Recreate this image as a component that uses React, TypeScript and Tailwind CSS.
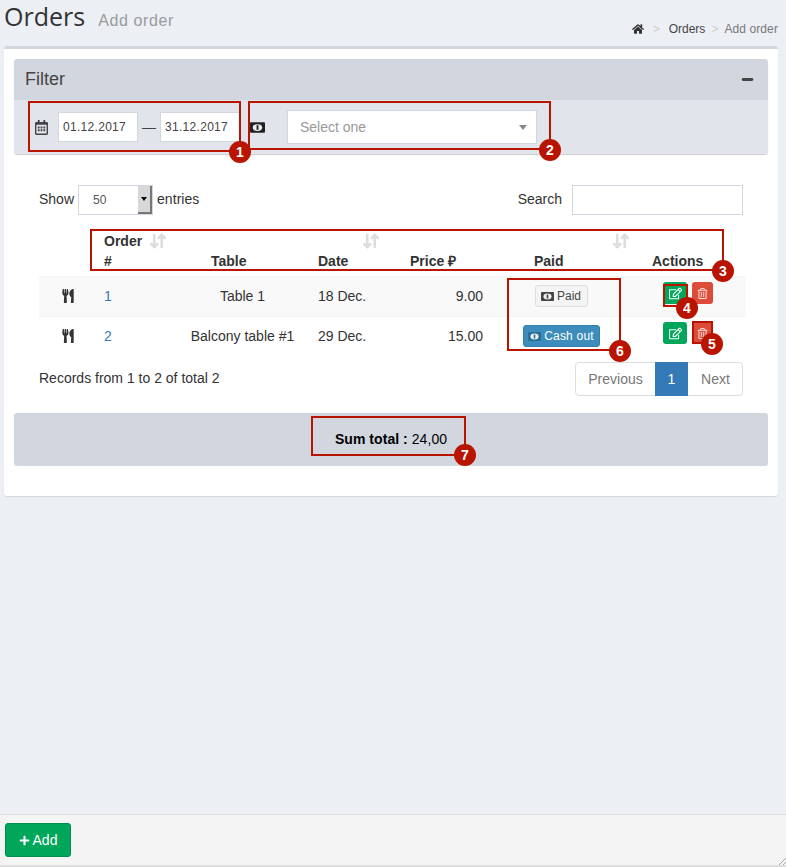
import React from 'react';
import { ArrowDownUp, Minus } from 'lucide-react';
import { FaHome, FaRegCalendarAlt, FaUtensils, FaRegEdit, FaRegTrashAlt, FaPlus } from 'react-icons/fa';

// Red numbered callout drawn over the screenshot
const Callout: React.FC<{ box: string; badge: string; n: number }> = ({ box, badge, n }) => (
  <>
    <div className={`absolute border-2 border-[#b81400] ${box}`} />
    <div className={`absolute w-[22px] h-[22px] rounded-full bg-[#b81400] text-white text-[14px] font-bold flex items-center justify-center ${badge}`}>
      {n}
    </div>
  </>
);

const SortIcon = () => <ArrowDownUp className="h-[18px] w-[18px] text-[#dddddd]" strokeWidth={3.5} />;

// Banknote icon, dark body with a light oval in the middle
const MoneyIcon: React.FC<{ className?: string }> = ({ className }) => (
  <svg viewBox="0 0 16 11" className={className} fill="currentColor">
    <rect x="0" y="0" width="16" height="11" rx="1" />
    <ellipse cx="8" cy="5.5" rx="5" ry="3.6" fill="#fff" opacity="0.92" />
    <rect x="7" y="3" width="2" height="5" />
  </svg>
);

const COLS = 'grid-cols-[60px_90px_107px_100px_100px_130px_120px]';

const Row: React.FC<{ bg?: string; n: string; table: string; date: string; price: string; children: React.ReactNode }> = ({
  bg,
  n,
  table,
  date,
  price,
  children,
}) => (
  <div className={`h-[39.5px] grid ${COLS} items-center ${bg ?? ''}`}>
    <span className="flex justify-end pr-[24px]"><FaUtensils className="h-[14px] w-[14px] text-[#333]" /></span>
    <span className="pl-[5px] text-[#337ab7]">{n}</span>
    <span className="text-center whitespace-nowrap">{table}</span>
    <span className="pl-[22px] whitespace-nowrap">{date}</span>
    <span className="text-right pr-[13px]">{price}</span>
    <span className="flex justify-center">{children}</span>
    <span className="flex gap-[5px] pl-[37px] -mt-[6px]">
      <span className="h-[22px] w-[24px] rounded-[3px] bg-[#00a65a] flex items-center justify-center">
        <FaRegEdit className="h-[13px] w-[13px] text-white" />
      </span>
      <span className="h-[22px] w-[21px] rounded-[3px] bg-[#dd4b39] flex items-center justify-center">
        <FaRegTrashAlt className="h-[11px] w-[11px] text-[#fbdcd6]" />
      </span>
    </span>
  </div>
);

const App: React.FC = () => {
  return (
    <div className="relative h-[867px] w-[786px] overflow-hidden bg-[#ecf0f5] font-['Liberation_Sans',Arial,sans-serif] text-[14px] text-[#333] flex flex-col">
      {/* Page title and breadcrumb */}
      <div className="h-[46px] flex-shrink-0 flex justify-between px-[4px]">
        <div className="flex items-baseline -mt-[1px]">
          <h1 className="text-[25px] leading-[34px] text-[#333] font-['Open_Sans',sans-serif]">Orders</h1>
          <span className="ml-[13px] text-[16px] tracking-[0.6px] text-[#9a9a9a]">Add order</span>
        </div>
        <div className="flex items-center h-[18px] mt-[20px] text-[12px] pr-[4px]">
          <FaHome className="h-[12px] w-[12px] text-[#333]" />
          <span className="mx-[9px] text-[#ccc]">&gt;</span>
          <span className="text-[#444]">Orders</span>
          <span className="mx-[6px] text-[#ccc]">&gt;</span>
          <span className="text-[#777] tracking-[0.1px]">Add order</span>
        </div>
      </div>

      {/* Main card */}
      <div className="ml-[4px] w-[774px] h-[450px] flex-shrink-0 bg-white border-t-[3px] border-[#d2d6de] rounded-[3px] shadow-[0_1px_1px_rgba(0,0,0,0.1)] px-[10px] pt-[10px]">
        {/* Filter box */}
        <div className="h-[95px] rounded-[3px] shadow-[0_1px_1px_rgba(0,0,0,0.2)] overflow-hidden">
          <div className="h-[41px] bg-[#d2d6de] flex items-center justify-between pl-[11px] pr-[13px]">
            <span className="text-[18px] text-[#444]">Filter</span>
            <Minus className="h-[15px] w-[15px] text-[#444]" strokeWidth={4.5} />
          </div>
          <div className="h-[54px] bg-[#e1e4ea] flex items-center pl-[21px]">
            <FaRegCalendarAlt className="h-[15px] w-[13px] text-[#444]" />
            <div className="ml-[10px] w-[80px] h-[30px] bg-white border border-[#d2d6de] flex items-center pl-[4px] text-[12px] tracking-[0.3px] text-[#444]">01.12.2017</div>
            <span className="w-[22px] text-center text-[14px] text-[#444]">—</span>
            <div className="w-[80px] h-[30px] bg-white border border-[#d2d6de] flex items-center pl-[4px] text-[12px] tracking-[0.3px] text-[#444]">31.12.2017</div>
            <MoneyIcon className="ml-[10px] h-[11px] w-[15px] text-[#222]" />
            <div className="ml-[22px] w-[250px] h-[34px] bg-white border border-[#d2d6de] flex items-center justify-between pl-[12px] pr-[9px] text-[14px] text-[#999]">
              <span>Select one</span>
              <span className="w-0 h-0 border-x-[4px] border-x-transparent border-t-[5px] border-t-[#888]" />
            </div>
          </div>
        </div>

        {/* Table controls */}
        <div className="mt-[31px] px-[25px] h-[30px] flex items-center justify-between">
          <div className="flex items-center">
            <span className="-mt-[2px]">Show</span>
            <div className="ml-[4px] w-[75px] h-[30px] border border-[#d2d6de] flex items-center justify-between">
              <span className="pl-[14px] text-[12px] text-[#555]">50</span>
              <span className="w-[14px] h-[28px] bg-[#d8d8d8] border-r-2 border-b-2 border-[#777] flex items-center justify-center">
                <span className="w-0 h-0 border-x-[3px] border-x-transparent border-t-[4px] border-t-black" />
              </span>
            </div>
            <span className="ml-[4px] -mt-[2px] tracking-[0.05px]">entries</span>
          </div>
          <div className="flex items-center">
            <span className="-mt-[2px]">Search</span>
            <div className="ml-[10px] w-[171px] h-[30px] border border-[#d2d6de]" />
          </div>
        </div>

        {/* Orders table */}
        <div className="mx-[25px] mt-[16px] w-[707px]">
          <div className="h-[46px] border-b border-[#f4f4f4] font-bold leading-[20px]">
            <div className="flex h-[20px] items-center">
              <span className="ml-[65px]">Order</span>
              <span className="ml-[7px]"><SortIcon /></span>
              <span className="ml-[195px]"><SortIcon /></span>
              <span className="ml-[232px]"><SortIcon /></span>
            </div>
            <div className={`grid ${COLS} h-[20px]`}>
              <span />
              <span className="pl-[5px]">#</span>
              <span className="pl-[22px]">Table</span>
              <span className="pl-[22px]">Date</span>
              <span className="pl-[14px] whitespace-nowrap">Price ₽</span>
              <span className="pl-[38px]">Paid</span>
              <span className="pl-[26px] whitespace-nowrap">Actions</span>
            </div>
          </div>
          <Row bg="bg-[#f9f9f9] border-b border-[#f4f4f4]" n="1" table="Table 1" date="18 Dec." price="9.00">
            <span className="h-[22px] w-[53px] border border-[#ddd] rounded-[3px] bg-[#f4f4f4] flex items-center justify-center text-[12px] text-[#444]">
              <MoneyIcon className="h-[9px] w-[13px] mr-[3px]" />Paid
            </span>
          </Row>
          <Row n="2" table="Balcony table #1" date="29 Dec." price="15.00">
            <span className="h-[22px] w-[77px] rounded-[3px] bg-[#3c8dbc] border border-[#367fa9] flex items-center justify-center text-[12px] tracking-[0.2px] text-white whitespace-nowrap">
              <MoneyIcon className="h-[9px] w-[13px] mr-[3px] text-[#2a6f98]" />Cash out
            </span>
          </Row>
        </div>

        {/* Table footer */}
        <div className="mt-[6px] px-[25px] flex items-start justify-between h-[51px]">
          <span className="mt-[6px]">Records from 1 to 2 of total 2</span>
          <div className="flex h-[34px] rounded-[4px] border border-[#ddd] text-[#777]">
            <span className="w-[79px] flex items-center justify-center">Previous</span>
            <span className="w-[33px] -my-px flex items-center justify-center bg-[#337ab7] text-white">1</span>
            <span className="w-[54px] pl-[1px] flex items-center justify-center">Next</span>
          </div>
        </div>

        {/* Sum total */}
        <div className="h-[53px] rounded-[3px] bg-[#d2d6de] flex items-center justify-center text-black">
          <span className="tracking-[0.05px]"><b>Sum total :</b> 24,00</span>
        </div>
      </div>

      <div className="flex-1" />

      {/* Bottom action bar */}
      <div className="h-[51px] flex-shrink-0 bg-[#f4f4f4] border-t border-[#ddd] flex items-center px-[5px]">
        <button className="h-[34px] w-[66px] rounded-[3px] bg-[#00a65a] border border-[#008d4c] text-white flex items-center justify-center">
          <FaPlus className="h-[11px] w-[11px] mr-[3px]" />Add
        </button>
      </div>
      <div className="h-[2px] flex-shrink-0 bg-[#ddd]" />

      {/* Window resize grip */}
      <svg viewBox="0 0 8 8" className="absolute right-0 bottom-[2px] h-[8px] w-[8px] text-[#aaa]" stroke="currentColor" fill="none">
        <path d="M1 8 L8 1 M5 8 L8 5" />
      </svg>

      {/* Annotations */}
      <Callout box="left-[28px] top-[101px] w-[213px] h-[51px]" badge="left-[229px] top-[141px]" n={1} />
      <Callout box="left-[248px] top-[101px] w-[303px] h-[49px]" badge="left-[539px] top-[139px]" n={2} />
      <Callout box="left-[90px] top-[229px] w-[634px] h-[42px]" badge="left-[712px] top-[260px]" n={3} />
      <Callout box="left-[663px] top-[284px] w-[25px] h-[23px]" badge="left-[676px] top-[297px]" n={4} />
      <Callout box="left-[692px] top-[321px] w-[21px] h-[23px]" badge="left-[701px] top-[333px]" n={5} />
      <Callout box="left-[507px] top-[278px] w-[114px] h-[73px]" badge="left-[609px] top-[340px]" n={6} />
      <Callout box="left-[311px] top-[416px] w-[155px] h-[40px]" badge="left-[454px] top-[444px]" n={7} />
    </div>
  );
};

export default App;
